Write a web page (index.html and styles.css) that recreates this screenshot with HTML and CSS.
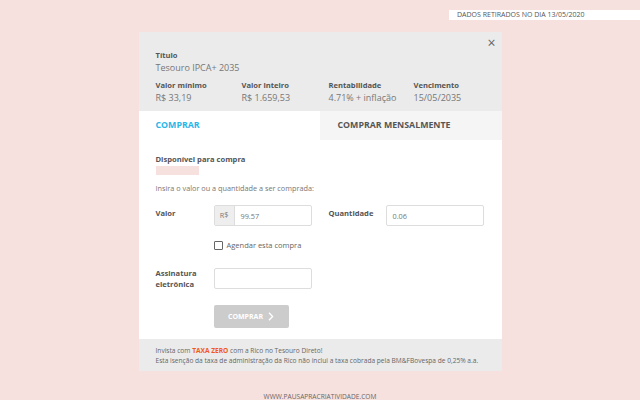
FILE: index.html
```html
<!DOCTYPE html>
<html lang="pt-BR">
<head>
    <meta charset="UTF-8">
    <meta name="viewport" content="width=device-width, initial-scale=1.0">
    <title>Tesouro IPCA+ 2035</title>
    <link rel="stylesheet" href="styles.css">
</head>
<body>
    <div class="top-bar">
        <div class="source-tag">DADOS RETIRADOS NO DIA 13/05/2020</div>
    </div>

    <div class="modal">
        <div class="modal-header">
            <span class="close">&times;</span>
            <div class="label">Título</div>
            <div class="title-name">Tesouro IPCA+ 2035</div>
            <div class="info-grid">
                <div class="label">Valor mínimo</div>
                <div class="label">Valor inteiro</div>
                <div class="label">Rentabilidade</div>
                <div class="label">Vencimento</div>
                <div class="value">R$ 33,19</div>
                <div class="value">R$ 1.659,53</div>
                <div class="value">4.71% + inflação</div>
                <div class="value">15/05/2035</div>
            </div>
        </div>

        <div class="tabs">
            <div class="tab active">COMPRAR</div>
            <div class="tab">COMPRAR MENSALMENTE</div>
        </div>

        <div class="modal-body">
            <div class="label">Disponível para compra</div>
            <div class="available-box"></div>
            <p class="hint">Insira o valor ou a quantidade a ser comprada:</p>

            <div class="form-row">
                <div class="field-label">Valor</div>
                <div class="input-group">
                    <span class="prefix">R$</span>
                    <span class="input-text">99.57</span>
                </div>
                <div class="field-label qty-label">Quantidade</div>
                <div class="input">
                    <span class="input-text">0.06</span>
                </div>
            </div>

            <div class="check-row">
                <span class="checkbox"></span>
                <span>Agendar esta compra</span>
            </div>

            <div class="form-row sign-row">
                <div class="field-label">Assinatura<br>eletrônica</div>
                <div class="input"></div>
            </div>

            <div class="button-row">
                <button class="buy-button">COMPRAR
                    <svg width="6" height="9" viewBox="0 0 6 9"><path d="M1 0.8 L4.6 4.5 L1 8.2" fill="none" stroke="#fff" stroke-width="1.3"/></svg>
                </button>
            </div>
        </div>

        <div class="modal-footer">
            <div>Invista com <span class="highlight">TAXA ZERO</span> com a Rico no Tesouro Direto!</div>
            <div>Esta isenção da taxa de administração da Rico não inclui a taxa cobrada pela BM&amp;FBovespa de 0,25% a.a.</div>
        </div>
    </div>

    <div class="site">WWW.PAUSAPRACRIATIVIDADE.COM</div>
</body>
</html>
```

FILE: styles.css
```css
body {
    font-family: "Open Sans", Arial, sans-serif;
    margin: 0;
    background-color: #f7e1df;
    color: #555;
}
.top-bar {
    display: flex;
    justify-content: flex-end;
    padding-top: 10px;
}
.source-tag {
    background-color: #fff;
    width: 183px;
    height: 10px;
    padding-left: 8px;
    font-size: 7px;
    line-height: 10px;
    color: #555;
}
.modal {
    width: 363px;
    margin: 12px auto 0;
    background-color: #fff;
}
.modal-header {
    position: relative;
    background-color: #ebebeb;
    padding: 18px 17px 7px;
}
.close {
    position: absolute;
    right: 6px;
    top: 1px;
    font-size: 14px;
    color: #666;
}
.label {
    font-size: 7.6px;
    line-height: 11px;
    font-weight: bold;
    color: #555;
}
.title-name {
    font-size: 9px;
    line-height: 13px;
    color: #777;
}
.info-grid {
    display: grid;
    grid-template-columns: 86px 87px 85px auto;
    margin-top: 6px;
}
.value {
    font-size: 9px;
    line-height: 13px;
    color: #777;
}
.tabs {
    display: flex;
}
.tab {
    flex: 1;
    height: 29px;
    line-height: 29px;
    padding-left: 18px;
    font-size: 8.8px;
    font-weight: bold;
    color: #555;
    background-color: #f5f5f5;
}
.tab.active {
    padding-left: 17px;
    color: #29b6e8;
    background-color: #fff;
}
.modal-body {
    padding: 14px 17px 11px;
}
.available-box {
    width: 43px;
    height: 9px;
    margin-top: 1px;
    background-color: #f7e1df;
}
.hint {
    margin: 8px 0 0;
    font-size: 7.3px;
    line-height: 11px;
    color: #777;
}
.form-row {
    display: flex;
    margin-top: 11px;
}
.field-label {
    width: 58px;
    font-size: 7.6px;
    line-height: 11px;
    font-weight: bold;
    color: #555;
    padding-top: 3px;
}
.qty-label {
    width: 57px;
    margin-left: 17px;
}
.input-group,
.input {
    display: flex;
    width: 96px;
    height: 19px;
    border: 1px solid #ddd;
    border-radius: 2px;
    background-color: #fff;
}
.prefix {
    width: 19px;
    background-color: #eee;
    border-right: 1px solid #ddd;
    font-size: 7.3px;
    line-height: 19px;
    text-align: center;
    color: #777;
}
.input-text {
    padding-left: 6px;
    font-size: 7.3px;
    line-height: 20px;
    color: #777;
}
.check-row {
    display: flex;
    align-items: center;
    margin: 14px 0 0 58px;
    font-size: 7.5px;
    color: #666;
}
.checkbox {
    width: 7px;
    height: 7px;
    border: 1px solid #666;
    border-radius: 1px;
    margin-right: 4px;
}
.sign-row {
    margin-top: 18px;
}
.sign-row .field-label {
    padding-top: 0;
}
.button-row {
    margin: 15px 0 0 58px;
}
.buy-button {
    display: flex;
    align-items: center;
    justify-content: center;
    gap: 5px;
    width: 75px;
    height: 23px;
    border: none;
    border-radius: 2px;
    background-color: #cccccc;
    color: #fff;
    font-family: "Open Sans", Arial, sans-serif;
    font-size: 7px;
    font-weight: bold;
    padding: 0;
}
.modal-footer {
    background-color: #ebebeb;
    padding: 7px 17px 6px;
    font-size: 6.6px;
    line-height: 9.5px;
    color: #666;
}
.highlight {
    color: #f05a22;
    font-weight: bold;
}
.site {
    margin-top: 21px;
    text-align: center;
    font-size: 6.6px;
    color: #666;
}
```
